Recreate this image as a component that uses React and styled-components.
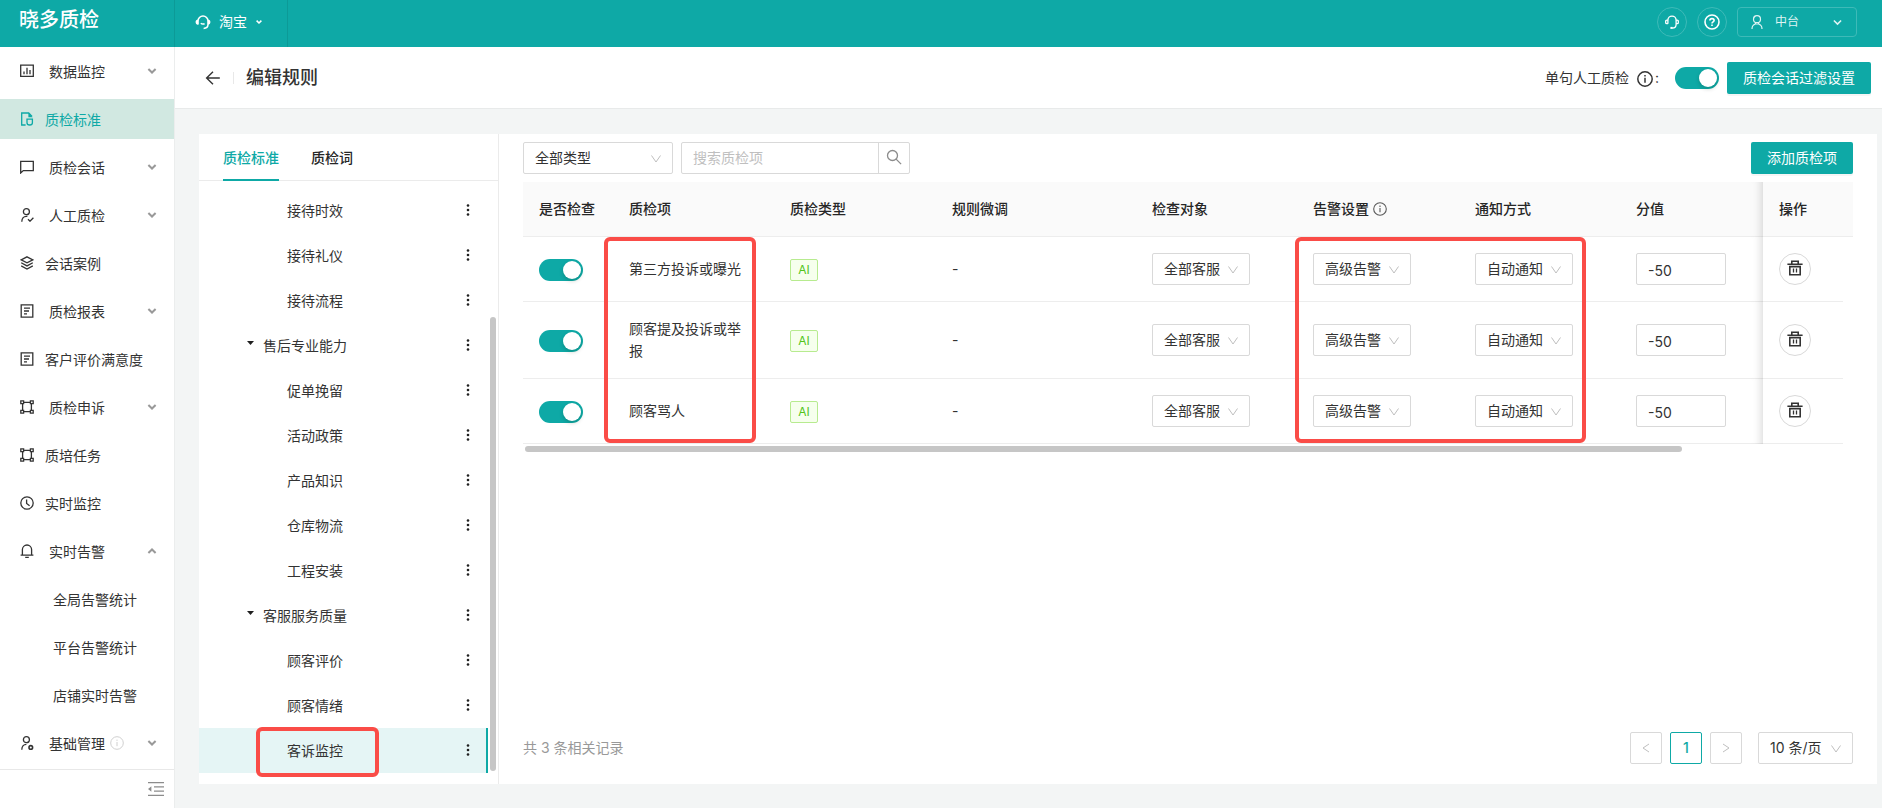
import React, { useState } from 'react';
import styled, { createGlobalStyle, css } from 'styled-components';

const GlobalStyle = createGlobalStyle`
	* {
		box-sizing: border-box;
	}
	body {
		margin: 0;
		background: #f3f5f5;
		color: #333;
		font-family: Inter, 'Noto Sans CJK SC', sans-serif;
		font-size: 14px;
		line-height: 22px;
	}
	button, input, select {
		font: inherit;
		color: inherit;
		margin: 0;
	}
	button {
		cursor: pointer;
	}
	a {
		color: inherit;
		text-decoration: none;
	}
	svg {
		display: block;
		flex: none;
	}
`;

const Page = styled.div`
	min-height: 100vh;
	display: flex;
	flex-direction: column;
`;

const TopBar = styled.header`
	display: flex;
	height: 47px;
	background: #0ea9a6;
	color: #fff;
`;

const Logo = styled.div`
	width: 175px;
	padding: 6px 0 0 19px;
	font-size: 20px;
	line-height: 28px;
	font-weight: 500;
	border-right: 1px solid #0c9a97;
`;

const PlatformButton = styled.button`
	display: flex;
	align-items: center;
	width: 113px;
	padding: 0 0 3px 20px;
	border: 0;
	border-right: 1px solid #0c9a97;
	background: none;
`;

const PlatformName = styled.span`
	margin: 0 9px 0 8px;
`;

const TopActions = styled.div`
	display: flex;
	align-items: center;
	gap: 10px;
	margin-left: auto;
	padding: 0 25px 3px 0;
`;

const TopRound = styled.button`
	display: flex;
	align-items: center;
	justify-content: center;
	width: 30px;
	height: 30px;
	padding: 0;
	border: 1px solid #3ebab8;
	border-radius: 50%;
	background: none;
`;

const UserButton = styled.button`
	display: flex;
	align-items: center;
	width: 120px;
	height: 30px;
	padding: 0 14px 0 12px;
	border: 1px solid #3ebab8;
	border-radius: 4px;
	background: none;
	font-size: 12px;
	line-height: 20px;
	color: #dff4f3;
`;

const UserName = styled.span`
	margin: 0 auto 0 11px;
`;

const Body = styled.div`
	display: flex;
	flex: 1;
`;

const Sidebar = styled.nav`
	display: flex;
	flex-direction: column;
	flex: none;
	width: 175px;
	background: #fff;
	border-right: 1px solid #ebeded;
`;

const Menu = styled.ul`
	flex: 1;
	margin: 0;
	padding: 4px 0 6px;
	list-style: none;
	display: flex;
	flex-direction: column;
	gap: 8px;
`;

const MenuLink = styled.a`
	display: flex;
	align-items: center;
	height: 40px;
	padding: 0 17px 0 ${({ $sub }) => ($sub ? '53px' : '20px')};
	white-space: nowrap;
	${({ $active }) =>
		$active &&
		css`
			background: #d1e8e1;
			color: #0ea9a6;
		`}
`;

const MenuText = styled.span`
	padding-top: 2px;
	margin-left: ${({ $group, $sub }) => ($sub ? '0' : $group ? '15px' : '11px')};
`;

const MenuArrow = styled.span`
	margin-left: auto;
	color: #999;
`;

const MenuHint = styled.span`
	margin-left: 5px;
	color: #d0d0d0;
`;

const SidebarFooter = styled.div`
	display: flex;
	align-items: center;
	justify-content: flex-end;
	height: 39px;
	padding-right: 10px;
	border-top: 1px solid #e8e8e8;
`;

const CollapseButton = styled.button`
	padding: 0;
	border: 0;
	background: none;
	color: #8c8c8c;
`;

const Main = styled.main`
	flex: 1;
	min-width: 0;
	display: flex;
	flex-direction: column;
`;

const PageHeader = styled.div`
	display: flex;
	align-items: center;
	height: 62px;
	padding: 0 11px 0 30px;
	background: #fff;
	border-bottom: 1px solid #e8eaea;
`;

const BackButton = styled.button`
	padding: 0;
	border: 0;
	background: none;
`;

const HeaderLine = styled.span`
	width: 1px;
	height: 12px;
	margin: 0 12px;
	background: #e8e8e8;
`;

const PageTitle = styled.h1`
	margin: 0 auto 0 0;
	font-size: 18px;
	line-height: 26px;
	font-weight: 500;
`;

const SwitchLabel = styled.label`
	display: flex;
	align-items: center;
	margin-right: 16px;
`;

const LabelIcon = styled.span`
	margin: 3px 2px 0 8px;
`;

const Switch = styled.input.attrs({ type: 'checkbox', role: 'switch' })`
	appearance: none;
	display: block;
	flex: none;
	width: 44px;
	height: 22px;
	border-radius: 11px;
	background: ${({ checked }) => (checked ? '#0ea9a6' : '#bfbfbf')};
	cursor: pointer;

	&::before {
		content: '';
		display: block;
		width: 18px;
		height: 18px;
		margin: 2px 0 0 ${({ checked }) => (checked ? '24px' : '2px')};
		border-radius: 50%;
		background: #fff;
		box-shadow: 0 2px 4px rgba(0, 35, 11, 0.2);
	}
`;

const RowSwitch = styled(Switch)`
	margin-top: 2px;
`;

const PrimaryButton = styled.button`
	height: 32px;
	padding: 0 16px;
	border: 0;
	border-radius: 2px;
	background: #0ea9a6;
	color: #fff;
	white-space: nowrap;
	box-shadow: 0 2px 0 rgba(0, 0, 0, 0.04);
`;

const HeaderButton = styled(PrimaryButton)`
	margin-left: 8px;
`;

const Card = styled.div`
	display: flex;
	flex: 1;
	margin: 25px 5px 24px 24px;
	background: #fff;
`;

const TreePanel = styled.section`
	flex: none;
	width: 300px;
	border-right: 1px solid #ebebeb;
`;

const Tabs = styled.div`
	display: flex;
	gap: 32px;
	height: 47px;
	padding: 0 24px;
	border-bottom: 1px solid #ebebeb;
`;

const Tab = styled.button`
	height: 47px;
	padding: 2px 0 0;
	border: 0;
	border-bottom: 2px solid ${({ $active }) => ($active ? '#0ea9a6' : 'transparent')};
	background: none;
	font-weight: 500;
	color: ${({ $active }) => ($active ? '#0ea9a6' : '#262626')};
`;

const TreeScroll = styled.div`
	display: flex;
	padding: 7px 2px 11px 0;
`;

const Tree = styled.ul`
	flex: 1;
	margin: 0;
	padding: 0;
	list-style: none;
`;

const TreeRow = styled.li`
	position: relative;
	display: flex;
	align-items: center;
	height: 45px;
	padding: 0 16px 0 ${({ $group }) => ($group ? '48px' : '88px')};
	border-right: 2px solid ${({ $active }) => ($active ? '#0ea9a6' : 'transparent')};
	background: ${({ $active }) => ($active ? '#e5f5f5' : 'none')};
`;

const TreeCaret = styled.span`
	margin: 0 9px 6px 0;
`;

const MoreButton = styled.button`
	margin-left: auto;
	padding: 0 0 1px;
	border: 0;
	background: none;
`;

const TreeThumb = styled.div`
	width: 6px;
	margin: 129px 0 2px 2px;
	border-radius: 3px;
	background: #c6c6c6;
`;

const Highlight = styled.span`
	position: absolute;
	z-index: 2;
	border: 4px solid #fa4c47;
	border-radius: 6px;
	pointer-events: none;
`;

const TreeHighlight = styled(Highlight)`
	left: 57px;
	top: -1px;
	width: 123px;
	height: 50px;
`;

const NameHighlight = styled(Highlight)`
	left: -9px;
	top: 0;
	width: 152px;
	height: 206px;
`;

const NoticeHighlight = styled(Highlight)`
	left: -2px;
	top: 0;
	width: 291px;
	height: 206px;
`;

const RulePanel = styled.section`
	flex: 1;
	min-width: 0;
	display: flex;
	flex-direction: column;
	padding: 8px 24px 20px;
`;

const Toolbar = styled.div`
	display: flex;
	gap: 8px;
	margin-bottom: 8px;
`;

const SelectWrap = styled.span`
	position: relative;
	display: block;
	width: ${({ $width }) => $width};
	height: 32px;

	svg {
		position: absolute;
		right: 11px;
		top: 11px;
		color: #bfbfbf;
		pointer-events: none;
	}
`;

const SelectBox = styled.select`
	appearance: none;
	width: 100%;
	height: 32px;
	padding: 0 20px 0 11px;
	border: 1px solid #d9d9d9;
	border-radius: 2px;
	background: #fff;
`;

const SearchBox = styled.div`
	display: flex;
	width: 229px;
	height: 32px;
	border: 1px solid #d9d9d9;
	border-radius: 2px;
`;

const SearchInput = styled.input`
	flex: 1;
	min-width: 0;
	padding: 0 11px;
	border: 0;
	outline: 0;
	background: none;

	&::placeholder {
		color: #bfbfbf;
	}
`;

const SearchButton = styled.button`
	display: flex;
	justify-content: center;
	width: 31px;
	padding: 6px 0 0;
	border: 0;
	border-left: 1px solid #d9d9d9;
	background: none;
	color: #8c8c8c;
`;

const AddButton = styled(PrimaryButton)`
	margin-left: auto;
`;

const Table = styled.table`
	width: 100%;
	table-layout: fixed;
	border-collapse: separate;
	border-spacing: 0;
`;

const HeadCell = styled.th`
	position: relative;
	height: 55px;
	padding: 0 16px;
	background: #fafafa;
	border-bottom: 1px solid #ededed;
	font-weight: 500;
	color: #262626;
	text-align: left;
	white-space: nowrap;
`;

const HeadLabel = styled.span`
	display: flex;
	align-items: center;
	gap: 4px;

	svg {
		color: #595959;
	}
`;

const Cell = styled.td`
	position: relative;
	padding: 16px;
	border-bottom: 1px solid #ededed;
	height: 65px;
`;

const NameCell = styled(Cell)`
	padding-right: 32px;
`;

const fixedShadow = css`
	&::before {
		content: '';
		position: absolute;
		top: 0;
		bottom: -1px;
		right: 100%;
		width: 30px;
		box-shadow: inset -10px 0 8px -8px rgba(0, 0, 0, 0.15);
	}
`;

const FixedHead = styled(HeadCell)`
	${fixedShadow}
`;

const FixedCell = styled(Cell)`
	${fixedShadow}
`;

const GutterHead = styled(HeadCell)`
	padding: 0;
`;

const Tag = styled.span`
	display: block;
	width: 28px;
	margin-top: 2px;
	border: 1px solid #b7eb8f;
	border-radius: 2px;
	background: #f6ffed;
	color: #52c41a;
	font-size: 12px;
	line-height: 20px;
	text-align: center;
`;

const ScoreInput = styled.input`
	display: block;
	width: 90px;
	height: 32px;
	padding: 2px 11px 0;
	border: 1px solid #d9d9d9;
	border-radius: 2px;
`;

const TrashButton = styled.button`
	display: flex;
	align-items: center;
	justify-content: center;
	width: 32px;
	height: 32px;
	padding: 0 0 2px;
	border: 1px solid #d9d9d9;
	border-radius: 50%;
	background: #fff;
`;

const TableThumb = styled.div`
	width: 87%;
	height: 6px;
	margin: 2px;
	border-radius: 3px;
	background: #c6c6c6;
`;

const Footer = styled.div`
	display: flex;
	align-items: center;
	gap: 8px;
	margin-top: auto;
`;

const Total = styled.span`
	margin-right: auto;
	color: #999;
`;

const PageButton = styled.button`
	display: flex;
	align-items: center;
	justify-content: center;
	width: 32px;
	height: 32px;
	padding: 0;
	border: 1px solid ${({ $active }) => ($active ? '#0ea9a6' : '#d9d9d9')};
	border-radius: 2px;
	background: #fff;
	font-weight: 500;
	color: ${({ $active }) => ($active ? '#0ea9a6' : '#bfbfbf')};
`;

const PageSize = styled.div`
	margin-left: 8px;
`;

const Icon = ({ size = 14, box = 14, width = 1.3, children }) => (
	<svg
		width={size}
		height={size}
		viewBox={`0 0 ${box} ${box}`}
		fill='none'
		stroke='currentColor'
		strokeWidth={width}
		aria-hidden='true'
	>
		{children}
	</svg>
);

const ChartIcon = () => (
	<Icon>
		<path d='M.7 1.2h12.6v11.2H.7zM4 7.6v2.6M7 3.8v6.4M10 6v4.2' />
	</Icon>
);

const StandardIcon = () => (
	<Icon>
		<path d='M5.6 13H1.7V1h7l3.4 3.4' />
		<path d='M8.4.8v4.4h4.2z' fill='currentColor' stroke='none' />
		<path d='M7 7.2h5.4v3.6c0 1.4-1.6 2.2-2.7 2.2S7 12.2 7 10.8z' />
	</Icon>
);

const ChatIcon = () => (
	<Icon>
		<path d='M.7 13V1.4h12.6v9.2H3.3z' />
	</Icon>
);

const PersonCheckIcon = () => (
	<Icon>
		<circle cx='6.4' cy='3.7' r='3' />
		<path d='M1.800 13.800c0-3.600 2-5.400 4.600-5.400h1M8 11.200l2 2 3.400-3.400' />
	</Icon>
);

const PersonGearIcon = () => (
	<Icon>
		<circle cx='6.4' cy='3.7' r='3' />
		<path d='M1.800 13.800c0-3.600 2-5.400 4.600-5.400' />
		<circle cx='10.800' cy='11.400' r='1.800' strokeWidth='1.600' />
	</Icon>
);

const LayersIcon = () => (
	<Icon>
		<path d='M7 .8l5.800 3L7 6.800l-5.800-3zM1.200 6.800L7 9.900l5.800-3.100M1.200 9.900L7 13l5.800-3.100' />
	</Icon>
);

const ReportIcon = () => (
	<Icon>
		<path d='M1.200.9h11.600v12.200H1.200zM4 4.200h6M4 7h5M4 9.800h3' />
	</Icon>
);

const FrameIcon = () => (
	<Icon>
		<path d='M2.600 3.500v7M11.400 3.500v7M3.500 2.400h7M3.500 11.600h7' />
		<path d='M.8.8h2.800v2.800H.8zM10.400.8h2.800v2.800h-2.800zM.8 10.400h2.800v2.800H.8zM10.400 10.400h2.800v2.800h-2.800z' />
	</Icon>
);

const ClockIcon = () => (
	<Icon>
		<circle cx='7' cy='7' r='6.2' />
		<path d='M6.600 3.400v4l3 2.400' />
	</Icon>
);

const BellIcon = () => (
	<Icon>
		<path d='M.6 11.200h12.800M2.400 11.200V5.600a4.600 4.600 0 0 1 9.200 0v5.600M5.200 13.400h3.600' />
	</Icon>
);

const InfoIcon = ({ size = 14, width = 1.1 }) => (
	<Icon size={size} width={width}>
		<circle cx='7' cy='7' r='6.3' />
		<path d='M7 6v4.200M7 3.600v1.300' />
	</Icon>
);

const ArrowIcon = ({ up }) => (
	<Icon size={10} box={10} width={2}>
		<path d={up ? 'M1.4 7L5 3.5 8.6 7' : 'M1.4 3L5 6.5 8.6 3'} />
	</Icon>
);

const SmallArrow = ({ size = 6 }) => (
	<Icon size={size} box={8} width={size > 6 ? 1.4 : 2}>
		<path d='M.8 2.200L4 5.400l3.200-3.200' />
	</Icon>
);

const SelectArrow = () => (
	<Icon size={12} box={12} width={1}>
		<path d='M1.500 2.500L6 9l4.500-6.500' />
	</Icon>
);

const HeadsetIcon = () => (
	<Icon size={16} box={16} width={1.5}>
		<path d='M3 10.600V7a5 5 0 0 1 10 0v3.600c0 2.400-1.800 3.800-4.400 3.800M5.800 9.200c1 1 2.400 1.100 3.800.5' />
		<path d='M3.200 5.400v5.200C1.400 10.600.6 9.600.6 8s.8-2.600 2.600-2.600zM12.800 5.400v5.200c1.800 0 2.600-1 2.600-2.600s-.8-2.600-2.600-2.600z' fill='currentColor' stroke='none' />
	</Icon>
);

const HeadsetLineIcon = () => (
	<Icon>
		<path d='M2.900 8.800V5.200a4.100 4.100 0 0 1 8.200 0v4.200c0 2.200-1.400 3.600-3.900 3.600' />
		<path d='M2.900 5.200H1.800Q.7 5.200.7 6.100v1.600q0 1 1.100 1h1.100M11.100 5.200h1.100q1.100 0 1.100.9v1.600q0 1-1.100 1h-1.100' />
		<path d='M5.400 12.900h2.200' strokeWidth='2' />
	</Icon>
);

const HelpIcon = () => (
	<Icon size={16} box={16} width={1.6}>
		<circle cx='8' cy='8' r='7' />
		<path d='M5.900 6.600c0-1.300.9-2 2.100-2s2.100.8 2.100 1.900c0 1.300-2.100 1.500-2.100 3M8 10.400v1.500' />
	</Icon>
);

const UserIcon = () => (
	<Icon width={1.2}>
		<circle cx='7' cy='4.2' r='3.5' />
		<path d='M2 14c0-3 1.600-4.400 3.400-5h3.200c1.800.6 3.400 2 3.400 5M5.400 7.500V9M8.600 7.500V9' />
	</Icon>
);

const BackIcon = () => (
	<Icon size={16} box={16} width={1.4}>
		<path d='M14.800 8H1.600M8 1.800L1.600 8 8 14.200' />
	</Icon>
);

const CollapseIcon = () => (
	<Icon size={16} box={16} width={1.3}>
		<path d='M0 1.600h16M6 5.800h10M6 10.200h10M0 14.400h16' />
		<path d='M3.400 5.200v5.600L0 8z' fill='currentColor' stroke='none' />
	</Icon>
);

const CaretIcon = () => (
	<svg width='7' height='4' viewBox='0 0 7 4' aria-hidden='true'>
		<path d='M0 0h7L3.500 4z' fill='#1f1f1f' />
	</svg>
);

const MoreIcon = () => (
	<svg width='4' height='14' viewBox='0 0 4 14' aria-hidden='true'>
		<circle cx='2' cy='2.500' r='1.300' fill='#1f1f1f' />
		<circle cx='2' cy='7' r='1.300' fill='#1f1f1f' />
		<circle cx='2' cy='11.500' r='1.300' fill='#1f1f1f' />
	</svg>
);

const SearchIcon = () => (
	<Icon size={16} box={16}>
		<circle cx='6.500' cy='6.500' r='5' />
		<path d='M10.100 10.100l5 5' />
	</Icon>
);

const TrashIcon = () => (
	<Icon size={16} box={16} width={1.6}>
		<path d='M.4 4.200h15.200M4.800 4V1.300h6.400V4M2.800 6.600h10.400v8.200H2.800z' />
		<path d='M6.500 8.600v4M9.500 8.600v4' strokeWidth='1.300' />
	</Icon>
);

const MENU = [
	{ label: '数据监控', icon: ChartIcon, group: true },
	{ label: '质检标准', icon: StandardIcon, active: true },
	{ label: '质检会话', icon: ChatIcon, group: true },
	{ label: '人工质检', icon: PersonCheckIcon, group: true },
	{ label: '会话案例', icon: LayersIcon },
	{ label: '质检报表', icon: ReportIcon, group: true },
	{ label: '客户评价满意度', icon: ReportIcon },
	{ label: '质检申诉', icon: FrameIcon, group: true },
	{ label: '质培任务', icon: FrameIcon },
	{ label: '实时监控', icon: ClockIcon },
	{ label: '实时告警', icon: BellIcon, group: true, open: true },
	{ label: '全局告警统计', sub: true },
	{ label: '平台告警统计', sub: true },
	{ label: '店铺实时告警', sub: true },
	{ label: '基础管理', icon: PersonGearIcon, group: true, hint: true },
];

const TREE = [
	{ label: '接待时效' },
	{ label: '接待礼仪' },
	{ label: '接待流程' },
	{ label: '售后专业能力', group: true },
	{ label: '促单挽留' },
	{ label: '活动政策' },
	{ label: '产品知识' },
	{ label: '仓库物流' },
	{ label: '工程安装' },
	{ label: '客服服务质量', group: true },
	{ label: '顾客评价' },
	{ label: '顾客情绪' },
	{ label: '客诉监控', active: true },
];

const RULES = ['第三方投诉或曝光', '顾客提及投诉或举报', '顾客骂人'];

const COLUMNS = [90, 161, 162, 200, 161, 162, 161, 143, 80, 10];

const Select = ({ label, options, width = '98px' }) => (
	<SelectWrap $width={width}>
		<SelectBox aria-label={label}>
			{options.map(option => (
				<option key={option}>{option}</option>
			))}
		</SelectBox>
		<SelectArrow />
	</SelectWrap>
);

const RuleRow = ({ name, first }) => {
	const [checked, setChecked] = useState(true);
	return (
		<tr>
			<Cell>
				<RowSwitch aria-label={name} checked={checked} onChange={e => setChecked(e.target.checked)} />
			</Cell>
			<NameCell>
				{name}
				{first && <NameHighlight />}
			</NameCell>
			<Cell>
				<Tag>AI</Tag>
			</Cell>
			<Cell>-</Cell>
			<Cell>
				<Select label='检查对象' options={['全部客服']} />
			</Cell>
			<Cell>
				<Select label='告警设置' options={['高级告警']} />
				{first && <NoticeHighlight />}
			</Cell>
			<Cell>
				<Select label='通知方式' options={['自动通知']} />
			</Cell>
			<Cell>
				<ScoreInput aria-label='分值' defaultValue='-50' />
			</Cell>
			<FixedCell>
				<TrashButton aria-label='删除'>
					<TrashIcon />
				</TrashButton>
			</FixedCell>
			<td />
		</tr>
	);
};

const App = () => {
	const [manual, setManual] = useState(true);
	return (
		<>
			<GlobalStyle />
			<Page>
				<TopBar>
					<Logo>晓多质检</Logo>
					<PlatformButton>
						<HeadsetIcon />
						<PlatformName>淘宝</PlatformName>
						<SmallArrow />
					</PlatformButton>
					<TopActions>
						<TopRound aria-label='客服'>
							<HeadsetLineIcon />
						</TopRound>
						<TopRound aria-label='帮助'>
							<HelpIcon />
						</TopRound>
						<UserButton>
							<UserIcon />
							<UserName>中台</UserName>
							<SmallArrow size={9} />
						</UserButton>
					</TopActions>
				</TopBar>
				<Body>
					<Sidebar>
						<Menu>
							{MENU.map(({ label, icon: ItemIcon, group, sub, active, open, hint }) => (
								<li key={label}>
									<MenuLink href='#' $sub={sub} $active={active}>
										{ItemIcon && <ItemIcon />}
										<MenuText $group={group} $sub={sub}>
											{label}
										</MenuText>
										{hint && (
											<MenuHint>
												<InfoIcon width={1} />
											</MenuHint>
										)}
										{group && (
											<MenuArrow>
												<ArrowIcon up={open} />
											</MenuArrow>
										)}
									</MenuLink>
								</li>
							))}
						</Menu>
						<SidebarFooter>
							<CollapseButton aria-label='收起菜单'>
								<CollapseIcon />
							</CollapseButton>
						</SidebarFooter>
					</Sidebar>
					<Main>
						<PageHeader>
							<BackButton aria-label='返回'>
								<BackIcon />
							</BackButton>
							<HeaderLine />
							<PageTitle>编辑规则</PageTitle>
							<SwitchLabel htmlFor='manual'>
								单句人工质检
								<LabelIcon>
									<InfoIcon size={16} width={1.3} />
								</LabelIcon>
								:
							</SwitchLabel>
							<Switch id='manual' checked={manual} onChange={e => setManual(e.target.checked)} />
							<HeaderButton>质检会话过滤设置</HeaderButton>
						</PageHeader>
						<Card>
							<TreePanel>
								<Tabs>
									<Tab $active>质检标准</Tab>
									<Tab>质检词</Tab>
								</Tabs>
								<TreeScroll>
									<Tree>
										{TREE.map(({ label, group, active }) => (
											<TreeRow key={label} $group={group} $active={active}>
												{group && (
													<TreeCaret>
														<CaretIcon />
													</TreeCaret>
												)}
												{label}
												{active && <TreeHighlight />}
												<MoreButton aria-label='更多'>
													<MoreIcon />
												</MoreButton>
											</TreeRow>
										))}
									</Tree>
									<TreeThumb />
								</TreeScroll>
							</TreePanel>
							<RulePanel>
								<Toolbar>
									<Select label='质检类型' options={['全部类型']} width='150px' />
									<SearchBox>
										<SearchInput aria-label='搜索质检项' placeholder='搜索质检项' />
										<SearchButton aria-label='搜索'>
											<SearchIcon />
										</SearchButton>
									</SearchBox>
									<AddButton>添加质检项</AddButton>
								</Toolbar>
								<Table>
									<colgroup>
										{COLUMNS.map((width, i) => (
											<col key={i} width={width} />
										))}
									</colgroup>
									<thead>
										<tr>
											<HeadCell>是否检查</HeadCell>
											<HeadCell>质检项</HeadCell>
											<HeadCell>质检类型</HeadCell>
											<HeadCell>规则微调</HeadCell>
											<HeadCell>检查对象</HeadCell>
											<HeadCell>
												<HeadLabel>
													告警设置
													<InfoIcon />
												</HeadLabel>
											</HeadCell>
											<HeadCell>通知方式</HeadCell>
											<HeadCell>分值</HeadCell>
											<FixedHead>操作</FixedHead>
											<GutterHead />
										</tr>
									</thead>
									<tbody>
										{RULES.map((name, i) => (
											<RuleRow key={name} name={name} first={i === 0} />
										))}
									</tbody>
								</Table>
								<TableThumb />
								<Footer>
									<Total>共 3 条相关记录</Total>
									<PageButton aria-label='上一页'>
										<Icon size={12} box={12} width={1}>
											<path d='M9 2L3 6l6 4' />
										</Icon>
									</PageButton>
									<PageButton $active>1</PageButton>
									<PageButton aria-label='下一页'>
										<Icon size={12} box={12} width={1}>
											<path d='M3 2l6 4-6 4' />
										</Icon>
									</PageButton>
									<PageSize>
										<Select label='每页条数' options={['10 条/页']} width='95px' />
									</PageSize>
								</Footer>
							</RulePanel>
						</Card>
					</Main>
				</Body>
			</Page>
		</>
	);
};

export default App;
